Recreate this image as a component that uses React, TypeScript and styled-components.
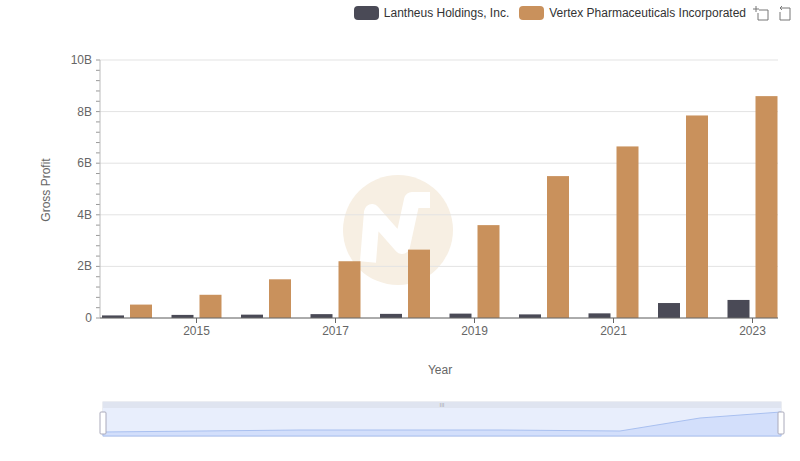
import React from "react";
import styled, { createGlobalStyle } from "styled-components";

const Global = createGlobalStyle`
  body { margin: 0; background: #fff; font-family: "Liberation Sans", Arial, sans-serif; }
`;
const Page = styled.div`
  width: 800px; height: 461px; display: flex; flex-direction: column; overflow: hidden;
`;
const LegendBar = styled.div`
  display: flex; justify-content: flex-end; align-items: center; gap: 10px;
  height: 26px; padding-right: 8px; font-size: 12px; color: #333;
`;
const LegendItem = styled.div`display: flex; align-items: center; gap: 5px;`;
const Swatch = styled.span<{ c: string }>`
  width: 25px; height: 14px; border-radius: 4px; background: ${p => p.c}; display: inline-block;
`;
const Tools = styled.div`display: flex; gap: 4px; margin-left: -4px;`;
const Chart = styled.svg`display: block;`;

const vertex = [0.52, 0.9, 1.5, 2.2, 2.65, 3.6, 5.5, 6.65, 7.85, 8.6];
const lan = [0.1, 0.12, 0.13, 0.15, 0.16, 0.17, 0.14, 0.18, 0.58, 0.7];
const Y0 = 318, PX = 25.8;

export default function App() {
  return (
    <Page>
      <Global />
      <LegendBar>
        <LegendItem><Swatch c="#4a4a56" />Lantheus Holdings, Inc.</LegendItem>
        <LegendItem><Swatch c="#c9915c" />Vertex Pharmaceuticals Incorporated</LegendItem>
        <Tools>
          <svg width="18" height="18" viewBox="0 0 18 18" fill="none" stroke="#777" strokeWidth="1">
            <path d="M4 2v6M1 5h6M7 6h9v10H6V9" />
          </svg>
          <svg width="18" height="18" viewBox="0 0 18 18" fill="none" stroke="#777" strokeWidth="1">
            <path d="M6 4H16V16H6V8M6 4l2-2M6 4l2 2" />
          </svg>
        </Tools>
      </LegendBar>
      <Chart width="800" height="435" viewBox="0 26 800 435" fontFamily="Liberation Sans, Arial, sans-serif">
        <circle cx="398" cy="230" r="55" fill="#f7efe3" />
        <path d="M368 262 L372 212 L402 246 L412 200 L430 200" stroke="#fff" strokeWidth="16" fill="none" strokeLinejoin="round" />
        {[0, 2, 4, 6, 8, 10].map(v => (
          <g key={v}>
            <line x1="100" x2="778" y1={Y0 - v * PX} y2={Y0 - v * PX} stroke="#e3e3e3" />
            <text x="92" y={Y0 - v * PX + 4} textAnchor="end" fontSize="12" fill="#666">{v === 0 ? "0" : v + "B"}</text>
          </g>
        ))}
        {Array.from({ length: 26 }, (_, i) => (
          <line key={i} x1="96" x2="100" y1={Y0 - i * PX * 0.4} y2={Y0 - i * PX * 0.4} stroke="#999" />
        ))}
        <line x1="100" x2="100" y1="60" y2={Y0} stroke="#bbb" />
        {vertex.map((v, i) => {
          const c = 127 + 69.5 * i;
          return (
            <g key={i}>
              <rect x={c - 25} y={Y0 - lan[i] * PX} width="22" height={lan[i] * PX} fill="#4a4a56" />
              <rect x={c + 3} y={Y0 - v * PX} width="22" height={v * PX} fill="#c9915c" />
            </g>
          );
        })}
        <line x1="100" x2="778" y1={Y0} y2={Y0} stroke="#666" />
        {[2015, 2017, 2019, 2021, 2023].map((y, k) => {
          const x = 196.5 + 139 * k;
          return (
            <g key={y}>
              <line x1={x} x2={x} y1={Y0} y2={Y0 + 5} stroke="#666" />
              <text x={x} y={Y0 + 17} textAnchor="middle" fontSize="12" fill="#666">{y}</text>
            </g>
          );
        })}
        <text x="440" y="374" textAnchor="middle" fontSize="12" fill="#666">Year</text>
        <text transform="translate(50 190) rotate(-90)" textAnchor="middle" fontSize="12" fill="#666">Gross Profit</text>
        <rect x="103" y="402" width="678" height="34" fill="none" stroke="#d8dce6" />
        <rect x="103" y="402" width="678" height="6" fill="#dfe4f0" />
        <rect x="103" y="408" width="678" height="28" fill="#e8eefc" />
        <path d="M103 432 L300 430 L500 430 L620 431 L700 418 L781 412 L781 436 L103 436Z" fill="#d3dffb" stroke="#a9c0f0" strokeWidth="1" />
        <text x="442" y="407" textAnchor="middle" fontSize="6" fill="#aaa">III</text>
        <rect x="100" y="412" width="6" height="22" rx="1" fill="#fff" stroke="#aab" />
        <rect x="778" y="412" width="6" height="22" rx="1" fill="#fff" stroke="#aab" />
      </Chart>
    </Page>
  );
}
